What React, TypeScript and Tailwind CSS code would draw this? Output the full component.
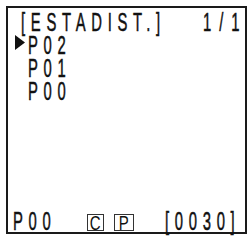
import React from "react";

// LCD-ish condensed text: Liberation Sans squeezed horizontally, slightly thickened
function Lcd({ text, className = "" }: { text: string; className?: string }) {
  return (
    <span
      className={`block origin-left scale-x-[0.57] whitespace-pre font-['Liberation_Sans',Arial,sans-serif] text-[26px] leading-[23px] text-[#111] [-webkit-text-stroke:0.5px_#111] ${className}`}
    >
      {text}
    </span>
  );
}

function Arrow() {
  return (
    <svg width="10" height="15" viewBox="0 0 10 15">
      <path d="M0 0L10 7.5L0 15Z" fill="#111" />
    </svg>
  );
}

function Boxed({ ch }: { ch: string }) {
  return (
    <div className="mt-[4px] flex h-[17px] w-[20px] items-center justify-center border border-[#333]">
      <span className="block scale-x-[0.75] font-['Liberation_Sans',Arial,sans-serif] text-[20px] leading-none text-[#111]">
        {ch}
      </span>
    </div>
  );
}

const programs = [
  { name: "P02", active: true },
  { name: "P01", active: false },
  { name: "P00", active: false },
];

export default function App() {
  return (
    <div className="h-[237px] w-[251px] bg-white pl-[6px] pt-[6px]">
      <div className="flex h-[228px] w-[241px] flex-col border-2 border-[#1a1a1a]">
        {/* header */}
        <div className="flex pl-[13px] pt-[3px]">
          <div className="min-w-0 flex-1">
            <Lcd text="[ESTADIST.]" className="tracking-[10px]" />
          </div>
          <div className="w-[42px] shrink-0">
            <Lcd text="1/1" className="tracking-[14px]" />
          </div>
        </div>

        {/* program list */}
        {programs.map((p) => (
          <div key={p.name} className="flex pl-[7px]">
            <div className="w-[13px] shrink-0 pt-[1px]">{p.active && <Arrow />}</div>
            <div className="w-[60px]">
              <Lcd text={p.name} className="tracking-[10px]" />
            </div>
          </div>
        ))}

        {/* status line */}
        <div className="mb-[-1px] mt-auto flex h-[23px] items-start pl-[5px]">
          <div className="w-[74px] shrink-0">
            <Lcd text="P00" className="tracking-[10px]" />
          </div>
          <Boxed ch="C" />
          <div className="ml-[10px]">
            <Boxed ch="P" />
          </div>
          <div className="ml-[31px] w-[80px]">
            <Lcd text="[0030]" className="tracking-[10px]" />
          </div>
        </div>
      </div>
    </div>
  );
}
